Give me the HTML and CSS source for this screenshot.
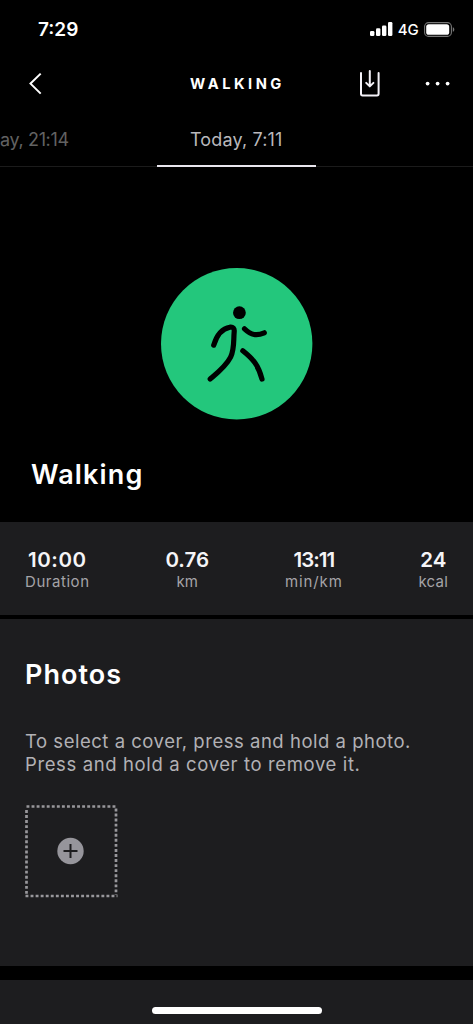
FILE: index.html
```html
<!DOCTYPE html>
<html lang="en">
<head>
<meta charset="utf-8">
<meta name="viewport" content="width=device-width, initial-scale=1">
<title>Walking</title>
<link rel="stylesheet" href="styles.css">
</head>
<body>
<div class="screen">
  <div class="status">
    <span class="time">7:29</span>
    <div class="status-right">
      <svg class="signal" width="23" height="14" viewBox="0 0 23 14" fill="#fff"><rect x="0" y="9" width="4.4" height="5" rx="1.3"/><rect x="6" y="6.3" width="4.4" height="7.7" rx="1.3"/><rect x="12" y="3.4" width="4.4" height="10.6" rx="1.3"/><rect x="18" y="0" width="4.4" height="14" rx="1.3"/></svg>
      <span class="network">4G</span>
      <svg class="battery" width="31" height="15" viewBox="0 0 31 15"><rect x=".6" y=".6" width="26.8" height="13.8" rx="4" fill="none" stroke="#777" stroke-width="1.1"/><rect x="2.2" y="2.2" width="23" height="10.6" rx="2.6" fill="#fff"/><path d="M28.8 5.2c2 .7 2 3.9 0 4.6z" fill="#777"/></svg>
    </div>
  </div>
  <header class="header">
    <svg class="back" width="14" height="24" viewBox="0 0 14 24" fill="none" stroke="#fff" stroke-width="2"><path d="M12.7 1.6 2.5 11.600l10.200 10"/></svg>
    <h1 class="title">WALKING</h1>
    <svg class="save" width="20" height="28" viewBox="0 0 20 28" fill="none" stroke="#f4f2f8" stroke-width="2" stroke-linecap="round" stroke-linejoin="round"><path d="M1 3v20.800q0 1.600 1.600 1.600h14.400q1.600 0 1.600-1.600V3M9.800 1v15M6.200 12.900l3.600 3.500 3.600-3.500"/></svg>
    <svg class="more" width="26" height="6" viewBox="0 0 26 6" fill="#fff"><circle cx="2.6" cy="2.600" r="1.900"/><circle cx="12.600" cy="2.600" r="1.900"/><circle cx="22.600" cy="2.600" r="1.900"/></svg>
  </header>
  <nav class="tabs">
    <span class="tab previous">ay, 21:14</span>
    <span class="tab active"><span class="tab-text">Today, 7:11</span></span>
    <span class="tab"></span>
  </nav>
  <section class="hero">
    <svg class="badge" width="152" height="152" viewBox="0 0 152 152"><circle cx="75.700" cy="75.700" r="75.700" fill="#23c77c"/><circle cx="78.400" cy="44.700" r="6.400"/><path d="M52.700 77.200C56 66 62 60.400 69 59.200c3-.4 4.500 1.300 4.200 4.200-.8 9.500.3 18-3.600 25.800C65 98.300 57 104.500 49.200 111M83.500 60.800c7 6.500 12 7.300 19.800 4M81.800 82.800c10 8 15.500 14 19.200 28.300" fill="none" stroke="#000" stroke-width="5.200" stroke-linecap="round" stroke-linejoin="round"/></svg>
    <h2 class="activity">Walking</h2>
  </section>
  <section class="stats">
    <div class="stat duration"><b>10:00</b><span>Duration</span></div>
    <div class="stat distance"><b>0.76</b><span>km</span></div>
    <div class="stat pace"><b>13:11</b><span>min/km</span></div>
    <div class="stat energy"><b>24</b><span>kcal</span></div>
  </section>
  <section class="photos">
    <h2 class="photos-title">Photos</h2>
    <p class="hint"><span class="hint-one">To select a cover, press and hold a photo.</span><br><span class="hint-two">Press and hold a cover to remove it.</span></p>
    <svg class="add" width="93" height="93" viewBox="0 0 93 93"><path d="M1.500 1.500H91M.500 91H92.500" stroke="#98979b" stroke-width="2.700" stroke-dasharray="2.900 2.160"/><path d="M1.500 4V90M91 2.500V90" stroke="#98979b" stroke-width="2.700" stroke-dasharray="2.900 2.160" stroke-dashoffset="-1"/><circle cx="45.500" cy="46" r="13.200" fill="#96959b"/><path d="M45.500 39v14M38.500 46h14" stroke="#1d1d1f" stroke-width="2"/></svg>
  </section>
  <footer class="next"><div class="home"></div></footer>
</div>
</body>
</html>
```
FILE: styles.css
```css
* { box-sizing: border-box; }
body { margin: 0; background: #000; font-family: Inter, "Liberation Sans", sans-serif; color: #fff; }
h1, h2, p { margin: 0; }
svg { display: block; flex: none; }
.screen { width: 473px; height: 1024px; overflow: hidden; display: flex; flex-direction: column; white-space: nowrap; }
.status { height: 58px; display: flex; align-items: center; justify-content: space-between; padding: 0 18px 0 38px; }
.time { font-size: 19px; font-weight: 600; }
.status-right { display: flex; align-items: center; }
.signal { margin-right: 5px; }
.network { font-size: 15px; font-weight: 500; letter-spacing: -0.2px; margin-right: 5.5px; }
.header { height: 51px; display: flex; align-items: center; padding-left: 28px; }
.title { font-size: 14.7px; line-height: 20px; font-weight: 700; letter-spacing: 3.5px; margin-left: 148px; width: 170px; }
.more { margin-left: 45px; }
.tabs { height: 58px; display: grid; grid-template-columns: 157px 159px 157px; }
.tab { font-size: 18px; line-height: 61px; height: 58px; border-bottom: 1px solid #1b1b1b; color: #626262; }
.previous { letter-spacing: -0.35px; }
.active { color: #b9b8bc; border-bottom: 2px solid #e9e6ee; padding-left: 33px; letter-spacing: 0.15px; }
.hero { height: 355px; display: flex; flex-direction: column; }
.badge { margin: 101px 0 0 161px; }
.activity { font-size: 27px; font-weight: 600; line-height: 34px; letter-spacing: 1.15px; margin: 38px 0 0 31px; }
.stats { height: 93px; background: #1d1d1f; display: flex; justify-content: space-between; padding: 26px 25px 0; }
.stat { display: flex; flex-direction: column; align-items: center; }
.stat b { font-size: 20.5px; line-height: 24px; font-weight: 600; color: #f5f5f7; }
.stat span { font-size: 15px; line-height: 19px; color: #a5a4a8; }
.duration { letter-spacing: 0.55px; }
.pace b { letter-spacing: -1px; }
.pace span { letter-spacing: 0.9px; }
.energy span { letter-spacing: 0.2px; }
.photos { height: 347px; margin-top: 4px; background: #1d1d1f; padding: 38px 25px 0; }
.photos-title { font-size: 27px; line-height: 36px; font-weight: 600; letter-spacing: 1.05px; }
.hint { font-size: 18.5px; line-height: 22.5px; color: #b2b1b5; margin-top: 37px; }
.hint-one { letter-spacing: 0.52px; }
.hint-two { letter-spacing: 0.62px; }
.add { margin-top: 30px; }
.next { height: 44px; margin-top: 14px; background: #1d1d1f; display: flex; justify-content: center; padding-top: 27px; }
.home { width: 170px; height: 7px; border-radius: 4px; background: #fff; }
```
